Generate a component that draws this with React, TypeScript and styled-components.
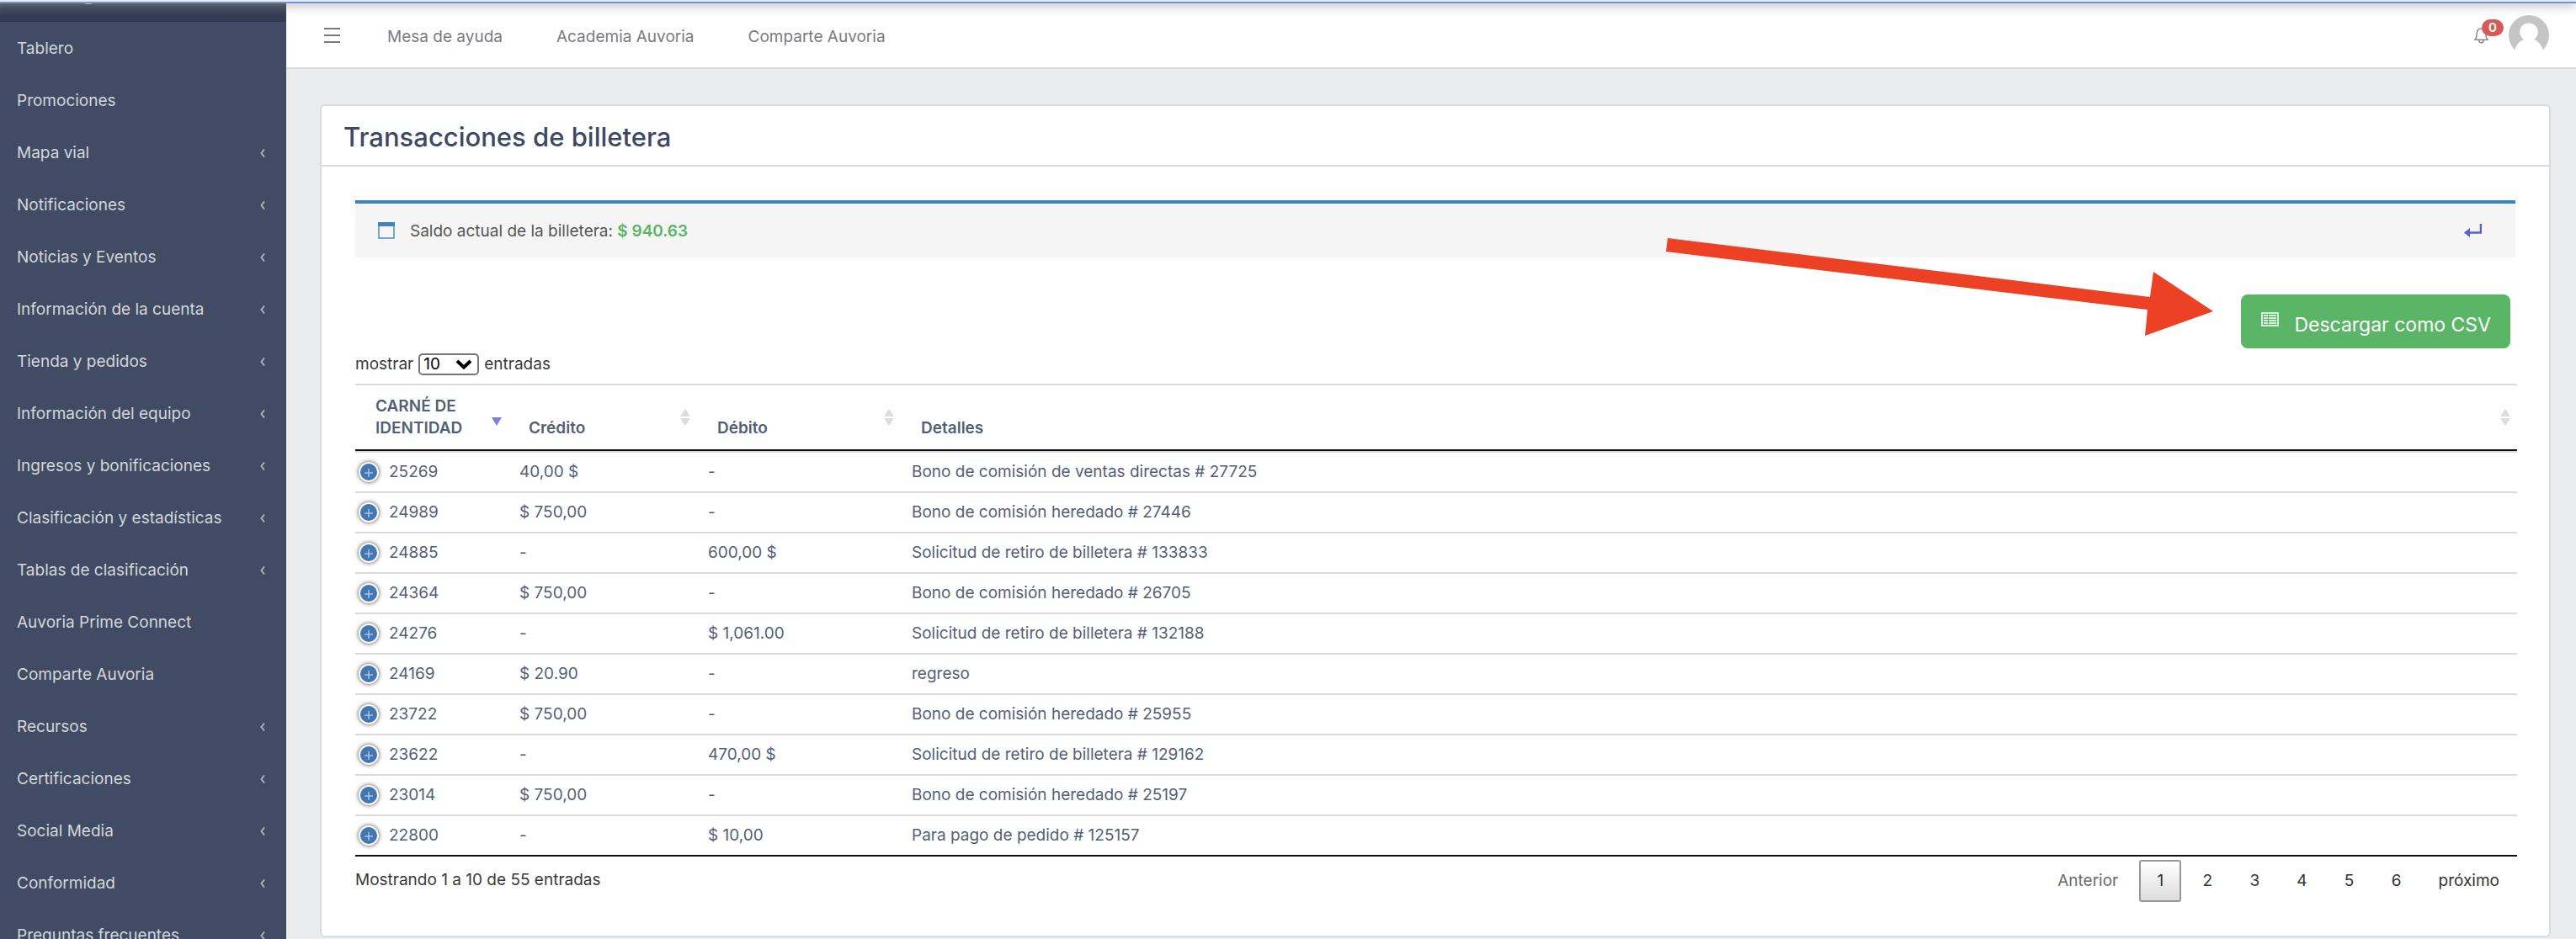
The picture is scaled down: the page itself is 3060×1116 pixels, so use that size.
import React from 'react';
import styled, { createGlobalStyle, css } from 'styled-components';

const GlobalStyle = createGlobalStyle`
  *, *::before, *::after { box-sizing: border-box; }
  body {
    margin: 0;
    background: #ebecee;
    color: #3a3a3a;
    font: 19px/26px Inter, "Noto Sans", sans-serif;
  }
  button, select { font: inherit; }
  a { color: inherit; text-decoration: none; }
`;

const Shell = styled.div`
  display: grid;
  grid-template-columns: 340px minmax(0, 1fr);
  align-items: start;
`;

const WindowEdge = styled.div`
  position: fixed;
  inset: 0 0 auto 0;
  z-index: 5;
  height: 4px;
  background: linear-gradient(#e6ecfa 50%, #6f92d6 50%);
  box-shadow: 0 2px 12px rgba(0, 0, 0, 0.5);
`;

const Sidebar = styled.nav`
  position: sticky;
  top: 0;
  height: 100vh;
  overflow: hidden;
  background: #414c64;
`;

const Brand = styled.div`
  height: 26px;
  padding-left: 99px;
  background: linear-gradient(#6e7079 4px, #4a5263 10px, #343e54 18px, #303a53);

  svg { display: block; }
`;

const Menu = styled.ul`
  margin: 0;
  padding: 0;
  list-style: none;
`;

const MenuLink = styled.a`
  display: flex;
  align-items: center;
  justify-content: space-between;
  height: 62px;
  padding: 2px 25px 0 20px;
  color: #d3d6db;
`;

const Main = styled.div`
  min-width: 0;
`;

const TopBar = styled.header`
  display: flex;
  align-items: center;
  height: 82px;
  padding: 4px 32px 0 45px;
  background: #fff;
  border-bottom: 2px solid #dadbde;
  color: #7d7983;
`;

const IconButton = styled.button`
  display: flex;
  padding: 0;
  border: 0;
  background: none;
  color: inherit;
`;

const TopLinks = styled.div`
  display: flex;
  flex: 1;
  gap: 64px;
  padding: 4px 0 0 56px;
`;

const BellButton = styled(IconButton)`
  position: relative;
  margin-right: 24px;
`;

const Badge = styled.span`
  position: absolute;
  left: 9px;
  top: -10px;
  width: 26px;
  height: 20px;
  border-radius: 10px;
  background: #d65b58;
  color: #fff;
  font-size: 15px;
  line-height: 19px;
  font-weight: 600;
  text-align: center;
`;

const Content = styled.main`
  padding: 42px 30px 2px 40px;
`;

const Card = styled.section`
  background: #fff;
  border: 2px solid #dadbe0;
  border-radius: 6px;
`;

const CardTitle = styled.h1`
  margin: 0;
  padding: 18px 26px 14px;
  border-bottom: 2px solid #dadbe0;
  color: #3d4962;
  font-size: 31px;
  line-height: 38px;
  font-weight: 500;
`;

const CardBody = styled.div`
  padding: 40px 38px 40px 40px;
`;

const Balance = styled.div`
  display: flex;
  align-items: center;
  height: 68px;
  margin-right: 2px;
  padding: 0 40px 0 27px;
  border-top: 4px solid #3f84ba;
  background: #f5f5f5;
  color: #555;
`;

const BalanceText = styled.p`
  flex: 1;
  margin: 0;
  padding: 2px 0 0 18px;
`;

const Amount = styled.strong`
  color: #5bb466;
  font-weight: 600;
`;

const Actions = styled.div`
  position: relative;
  display: flex;
  justify-content: flex-end;
  padding: 44px 8px 0 0;
`;

const Pointer = styled.svg`
  position: absolute;
  right: 360px;
  top: -24px;
  pointer-events: none;
`;

const DownloadButton = styled.button`
  display: flex;
  align-items: center;
  gap: 18px;
  height: 64px;
  padding: 0 23px 0 24px;
  border: 0;
  border-radius: 8px;
  background: #5bb567;
  color: #fff;
  font-size: 23px;
  line-height: 32px;

  span { padding-top: 8px; }
  svg { margin-bottom: 6px; }
`;

const LengthLabel = styled.label`
  display: flex;
  align-items: center;
  gap: 6px;
  margin: 6px 0 10px;
`;

const SelectWrap = styled.span`
  position: relative;
  display: flex;

  svg {
    position: absolute;
    right: 8px;
    top: 7px;
    pointer-events: none;
  }
`;

const LengthSelect = styled.select`
  appearance: none;
  width: 72px;
  height: 26px;
  padding: 0 4px;
  border: 2px solid #767676;
  border-radius: 5px;
  background: #fff;
  color: #000;
  line-height: 22px;
`;

const Table = styled.table`
  width: 100%;
  table-layout: fixed;
  border-collapse: separate;
  border-spacing: 0;
  border-top: 2px solid #dadbe0;
  border-bottom: 2px solid #111;
  color: #535f76;
`;

const Col = styled.col<{ $width?: number }>`
  ${(p) => p.$width && css`width: ${p.$width}px;`}
`;

const HeadCell = styled.th`
  height: 78px;
  padding: 12px 8px 12px 24px;
  border-bottom: 2px solid #111;
  text-align: left;
  vertical-align: bottom;
  font-weight: 600;
`;

const HeadInner = styled.div`
  display: flex;
  align-items: flex-end;
  justify-content: space-between;
`;

const SortButton = styled(IconButton)`
  padding-bottom: 16px;
`;

const Cell = styled.td`
  height: 48px;
  padding: 0 13px;
  border-top: 2px solid #dadbe0;
`;

const IdCell = styled.div`
  display: flex;
  align-items: center;
  gap: 12px;
  margin-left: -9px;
`;

const Expand = styled.button`
  display: grid;
  place-items: center;
  width: 24px;
  height: 24px;
  padding: 2px 0 0;
  border: 2px solid #fff;
  border-radius: 50%;
  background: #4277b2;
  box-shadow: 0 0 5px #444;
`;

const Footer = styled.div`
  display: flex;
  align-items: flex-start;
  justify-content: space-between;
  padding: 4px 2px 0 0;
`;

const Info = styled.div`
  padding-top: 11px;
`;

const Pager = styled.div`
  display: flex;
  gap: 6px;
`;

const PageButton = styled.button<{ $current?: boolean }>`
  min-width: 50px;
  height: 50px;
  padding: 0 17px;
  border: 2px solid transparent;
  border-radius: 3px;
  background: none;
  color: #333;

  &:disabled { color: #6b6b6b; }
  ${(p) => p.$current && css`
    border-color: #979797;
    background: linear-gradient(#fff, #dcdcdc);
  `}
`;

const menu: [string, boolean][] = [
  ['Tablero', false],
  ['Promociones', false],
  ['Mapa vial', true],
  ['Notificaciones', true],
  ['Noticias y Eventos', true],
  ['Información de la cuenta', true],
  ['Tienda y pedidos', true],
  ['Información del equipo', true],
  ['Ingresos y bonificaciones', true],
  ['Clasificación y estadísticas', true],
  ['Tablas de clasificación', true],
  ['Auvoria Prime Connect', false],
  ['Comparte Auvoria', false],
  ['Recursos', true],
  ['Certificaciones', true],
  ['Social Media', true],
  ['Conformidad', true],
  ['Preguntas frecuentes', true],
];

const rows = [
  ['25269', '40,00 $', '-', 'Bono de comisión de ventas directas # 27725'],
  ['24989', '$ 750,00', '-', 'Bono de comisión heredado # 27446'],
  ['24885', '-', '600,00 $', 'Solicitud de retiro de billetera # 133833'],
  ['24364', '$ 750,00', '-', 'Bono de comisión heredado # 26705'],
  ['24276', '-', '$ 1,061.00', 'Solicitud de retiro de billetera # 132188'],
  ['24169', '$ 20.90', '-', 'regreso'],
  ['23722', '$ 750,00', '-', 'Bono de comisión heredado # 25955'],
  ['23622', '-', '470,00 $', 'Solicitud de retiro de billetera # 129162'],
  ['23014', '$ 750,00', '-', 'Bono de comisión heredado # 25197'],
  ['22800', '-', '$ 10,00', 'Para pago de pedido # 125157'],
];

const Chevron = () => (
  <svg width="6" height="10" viewBox="0 0 6 10" fill="none" stroke="#a9afba" strokeWidth="2" aria-hidden="true">
    <path d="M5 .5 1.500 5 5 9.500" />
  </svg>
);

const SortIcon = ({ active }: { active?: boolean }) => (
  <svg width="12" height="20" viewBox="0 0 12 20" aria-hidden="true">
    {active ? <path d="M0 10h12L6 20z" fill="#7c7fdc" /> : <path d="M6 0l6 9H0zM0 11h12l-6 9z" fill="#dcdcdc" />}
  </svg>
);

export default function App() {
  return (
    <>
      <GlobalStyle />
      <WindowEdge />
      <Shell>
        <Sidebar>
          <Brand>
            <svg width="12" height="6" viewBox="0 0 12 6" aria-hidden="true">
              <path d="M0 3.500c3 2 9 2 12 0z" fill="#c9cacc" />
            </svg>
          </Brand>
          <Menu>
            {menu.map(([label, nested]) => (
              <li key={label}>
                <MenuLink href="#">{label}{nested && <Chevron />}</MenuLink>
              </li>
            ))}
          </Menu>
        </Sidebar>
        <Main>
          <TopBar>
            <IconButton aria-label="Menú">
              <svg width="19" height="18" viewBox="0 0 19 18" stroke="currentColor" strokeWidth="2">
                <path d="M0 1h19M0 9h19M0 17h19" />
              </svg>
            </IconButton>
            <TopLinks>
              <a href="#">Mesa de ayuda</a>
              <a href="#">Academia Auvoria</a>
              <a href="#">Comparte Auvoria</a>
            </TopLinks>
            <BellButton aria-label="Notificaciones">
              <svg width="17" height="19" viewBox="0 0 17 19" fill="none" stroke="#8c8993" strokeWidth="1.5">
                <path d="M1 14.200C3.500 12 3 9.500 3.200 6.500 3.400 3 5.500 1 8.500 1s5.100 2 5.300 5.500C14 9.500 13.500 12 16 14.200zM5.800 14.500c0 4.500 5.400 4.500 5.400 0" />
              </svg>
              <Badge>0</Badge>
            </BellButton>
            <IconButton aria-label="Perfil">
              <svg width="48" height="48" viewBox="0 0 48 48">
                <circle cx="24" cy="24" r="24" fill="#c5c5c5" />
                <path d="M24 9.500c6 0 10.800 4.500 10.800 10.500 0 4-2 7-4.800 9 5 2 9 6 10.500 12V48h-33v-7C9 35 13 31 18 29c-2.800-2-4.800-5-4.800-9 0-6 4.800-10.500 10.800-10.500z" fill="#fff" />
              </svg>
            </IconButton>
          </TopBar>
          <Content>
            <Card>
              <CardTitle>Transacciones de billetera</CardTitle>
              <CardBody>
                <Balance>
                  <svg width="20" height="20" viewBox="0 0 20 20" aria-hidden="true">
                    <path d="M1 1h18v18H1z" fill="none" stroke="#4a8fc4" strokeWidth="1.500" />
                    <path d="M0 0h20v5H0z" fill="#3f84ba" />
                  </svg>
                  <BalanceText>Saldo actual de la billetera: <Amount>$ 940.63</Amount></BalanceText>
                  <IconButton aria-label="Volver">
                    <svg width="21" height="18" viewBox="0 0 21 18">
                      <path d="M20 1v10.500H5" fill="none" stroke="#5560d6" strokeWidth="2.500" />
                      <path d="M0 11.500 7 6v11z" fill="#5560d6" />
                    </svg>
                  </IconButton>
                </Balance>
                <Actions>
                  <Pointer width="652" height="117" viewBox="0 0 652 117" aria-hidden="true">
                    <path d="M3 1 576 71l4-30 71 47-81 29 3-31L1 17z" fill="#ec4125" />
                  </Pointer>
                  <DownloadButton>
                    <svg width="21" height="17" viewBox="0 0 21 17" fill="none" stroke="#fff" aria-hidden="true">
                      <path d="M1 1h19v15H1z" strokeWidth="1.500" />
                      <path d="M3 4h5M9 4h9M3 7h5M9 7h9M3 10h5M9 10h9M3 13h5M9 13h9" strokeWidth="1.500" />
                    </svg>
                    <span>Descargar como CSV</span>
                  </DownloadButton>
                </Actions>
                <LengthLabel>
                  mostrar
                  <SelectWrap>
                    <LengthSelect defaultValue="10">
                      <option>10</option>
                      <option>25</option>
                      <option>50</option>
                    </LengthSelect>
                    <svg width="20" height="12" viewBox="0 0 20 12" fill="none" stroke="#000" strokeWidth="4" aria-hidden="true">
                      <path d="M2 2l8 7.500L18 2" />
                    </svg>
                  </SelectWrap>
                  entradas
                </LengthLabel>
                <Table>
                  <colgroup>
                    <Col $width={182} />
                    <Col $width={224} />
                    <Col $width={242} />
                    <Col />
                  </colgroup>
                  <thead>
                    <tr>
                      {['CARNÉ DE IDENTIDAD', 'Crédito', 'Débito', 'Detalles'].map((h, i) => (
                        <HeadCell key={h} scope="col">
                          <HeadInner>
                            {h}
                            <SortButton aria-label={`Ordenar por ${h}`}><SortIcon active={i === 0} /></SortButton>
                          </HeadInner>
                        </HeadCell>
                      ))}
                    </tr>
                  </thead>
                  <tbody>
                    {rows.map(([id, credit, debit, detail]) => (
                      <tr key={id}>
                        <Cell>
                          <IdCell>
                            <Expand aria-label={`Ver ${id}`}>
                              <svg width="10" height="10" stroke="#d5e2ee" viewBox="0 0 10 10"><path d="M5 0v10M0 5h10" /></svg>
                            </Expand>
                            {id}
                          </IdCell>
                        </Cell>
                        <Cell>{credit}</Cell>
                        <Cell>{debit}</Cell>
                        <Cell>{detail}</Cell>
                      </tr>
                    ))}
                  </tbody>
                </Table>
                <Footer>
                  <Info>Mostrando 1 a 10 de 55 entradas</Info>
                  <Pager>
                    <PageButton disabled>Anterior</PageButton>
                    {[1, 2, 3, 4, 5, 6].map((n) => (
                      <PageButton key={n} $current={n === 1}>{n}</PageButton>
                    ))}
                    <PageButton>próximo</PageButton>
                  </Pager>
                </Footer>
              </CardBody>
            </Card>
          </Content>
        </Main>
      </Shell>
    </>
  );
}
